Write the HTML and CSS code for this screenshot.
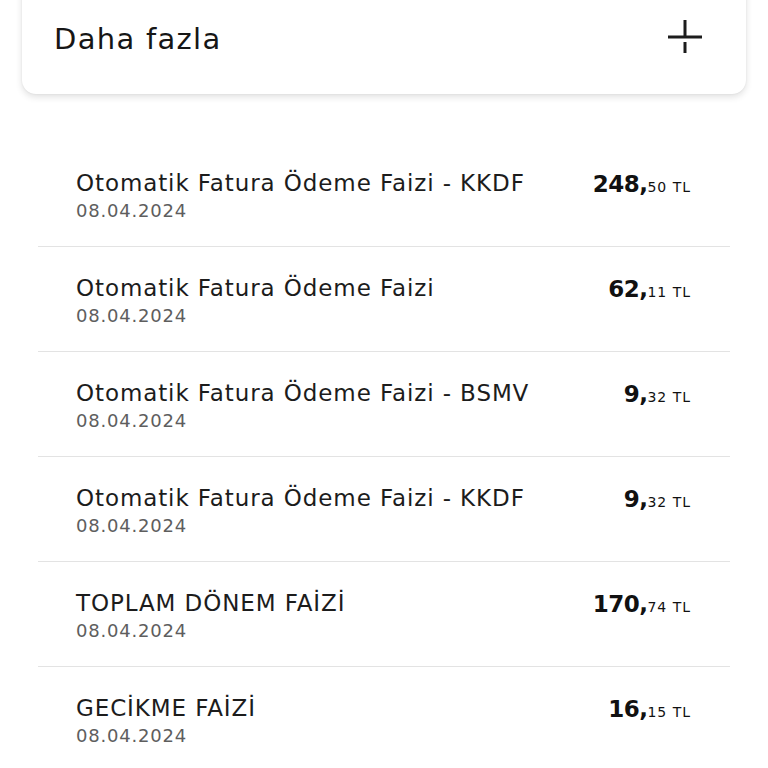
FILE: index.html
```html
<!DOCTYPE html>
<html lang="tr">
<head>
<meta charset="utf-8">
<link rel="stylesheet" href="styles.css">
</head>
<body>
<div class="card">
  <span class="card-title">Daha fazla</span>
  <svg class="plus" width="36" height="36" viewBox="0 0 36 36">
    <path d="M18 1 V18 M1 18 H35 M18 23 V34" stroke="#1c1c1c" stroke-width="3" fill="none"/>
  </svg>
</div>
<ul class="list">
  <li class="row"><div class="info"><div class="name">Otomatik Fatura Ödeme Faizi - KKDF</div><div class="date">08.04.2024</div></div><div class="amt"><span class="int">248,</span><span class="dec">50 TL</span></div></li>
  <li class="row"><div class="info"><div class="name">Otomatik Fatura Ödeme Faizi</div><div class="date">08.04.2024</div></div><div class="amt"><span class="int">62,</span><span class="dec">11 TL</span></div></li>
  <li class="row"><div class="info"><div class="name">Otomatik Fatura Ödeme Faizi - BSMV</div><div class="date">08.04.2024</div></div><div class="amt"><span class="int">9,</span><span class="dec">32 TL</span></div></li>
  <li class="row"><div class="info"><div class="name">Otomatik Fatura Ödeme Faizi - KKDF</div><div class="date">08.04.2024</div></div><div class="amt"><span class="int">9,</span><span class="dec">32 TL</span></div></li>
  <li class="row"><div class="info"><div class="name">TOPLAM DÖNEM FAİZİ</div><div class="date">08.04.2024</div></div><div class="amt"><span class="int">170,</span><span class="dec">74 TL</span></div></li>
  <li class="row"><div class="info"><div class="name">GECİKME FAİZİ</div><div class="date">08.04.2024</div></div><div class="amt"><span class="int">16,</span><span class="dec">15 TL</span></div></li>
</ul>
</body>
</html>
```
FILE: styles.css
```css
html, body { margin: 0; padding: 0; background: #fff; }
body { font-family: "DejaVu Sans", sans-serif; color: #1c1c1c; width: 768px; height: 768px; overflow: hidden; }
.card {
  margin: -20px 22px 0 22px;
  height: 114px;
  box-sizing: border-box;
  padding: 0 43px 37px 32px;
  background: #fff;
  border-radius: 0 0 14px 14px;
  box-shadow: 0 3px 7px rgba(0,0,0,0.12), 0 0 2px rgba(0,0,0,0.08);
  display: flex;
  align-items: flex-end;
  justify-content: space-between;
}
.card-title { font-size: 29px; letter-spacing: 1.3px; line-height: 36px; color: #161616; }
.plus { display: block; margin-bottom: 2px; }
.list { list-style: none; margin: 48px 38px 0 38px; padding: 0; }
.row {
  height: 105px;
  box-sizing: border-box;
  border-bottom: 1px solid #e3e3e3;
  display: flex;
  justify-content: space-between;
  align-items: flex-start;
  padding: 27px 39px 0 38px;
}
.row:last-child { border-bottom: none; }
.name { font-size: 23px; letter-spacing: 0.9px; line-height: 28px; color: #1c1c1c; }
.date { font-size: 18px; letter-spacing: 0.8px; line-height: 28px; color: #5e5e5e; }
.amt { white-space: nowrap; padding-top: 1px; line-height: 28px; color: #111; }
.int { font-size: 23px; font-weight: 700; letter-spacing: -0.5px; }
.dec { font-size: 14px; letter-spacing: 1px; }
```
